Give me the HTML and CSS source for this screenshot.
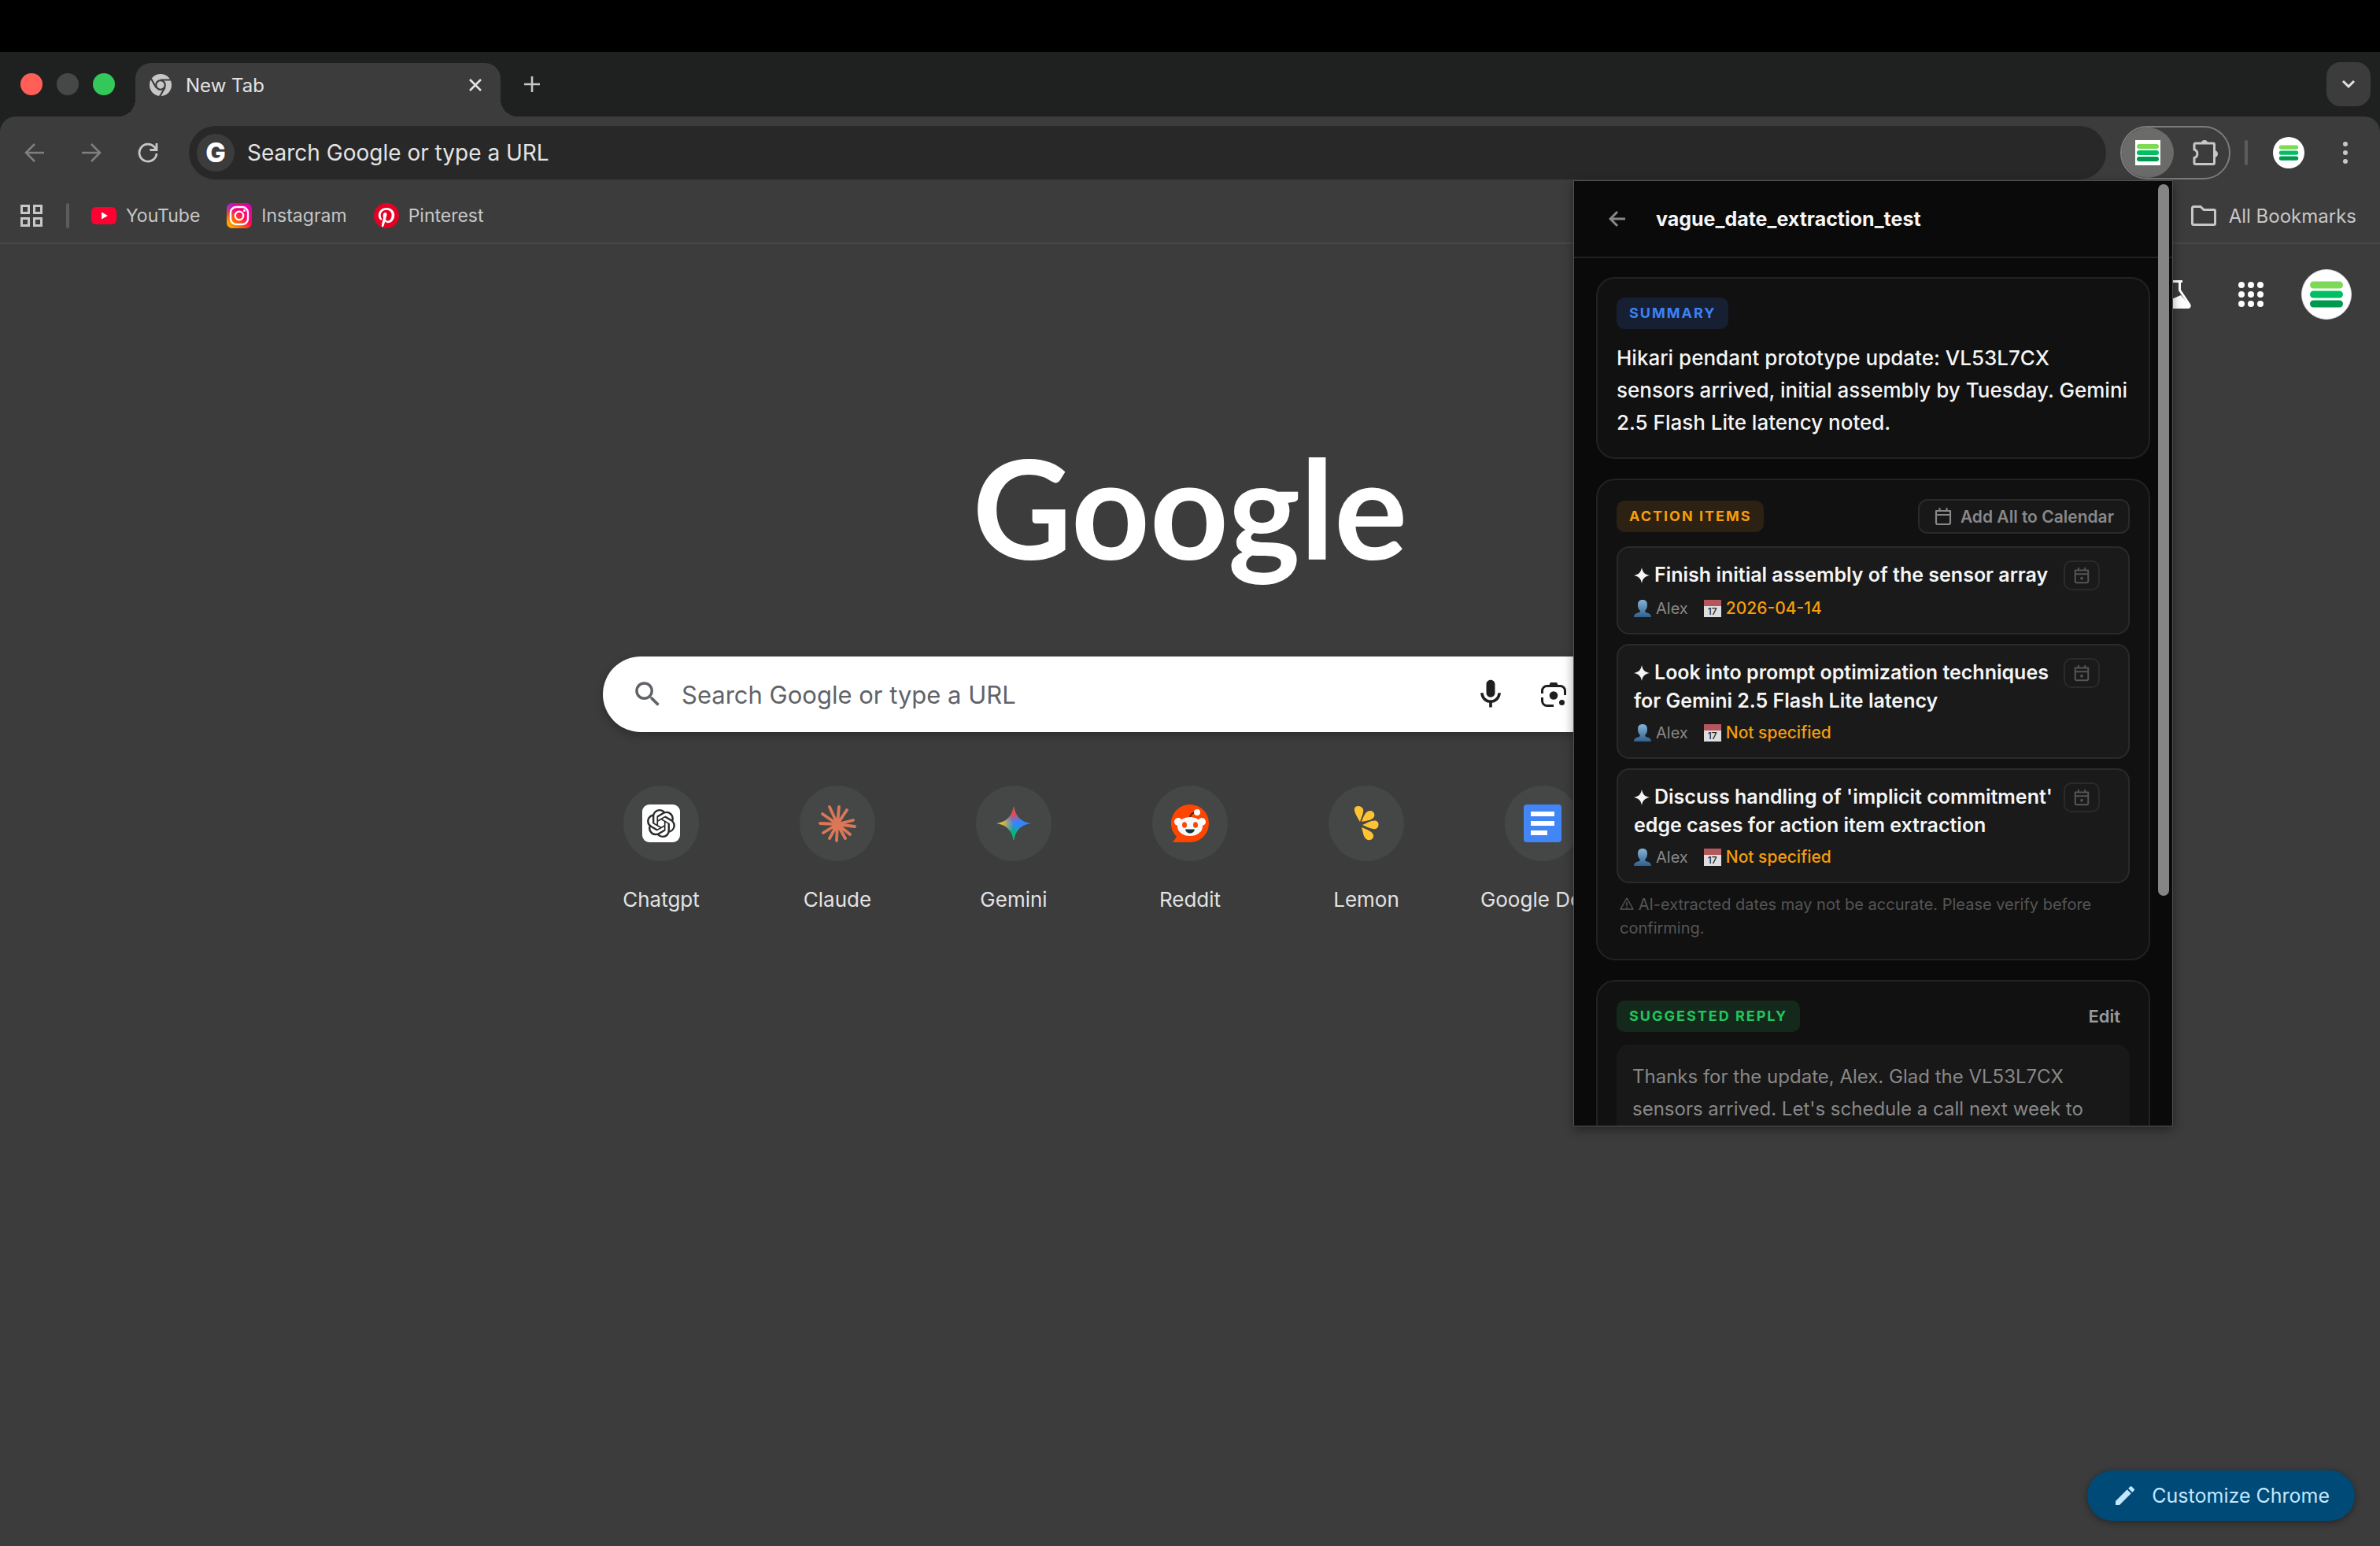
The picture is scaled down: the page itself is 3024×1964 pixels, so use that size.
FILE: index.html
```html
<!DOCTYPE html>
<html lang="en">
<head>
    <meta charset="UTF-8">
    <meta name="viewport" content="width=device-width, initial-scale=1.0">
    <title>New Tab</title>
    <link rel="stylesheet" href="styles.css">
</head>
<body>
    <svg width="0" height="0" class="defs">
        <symbol id="bars" viewBox="0 0 32 32">
            <rect x="2" y="5" width="28" height="6" rx="3" fill="#7ed957"/>
            <rect x="2" y="13" width="28" height="6" rx="3" fill="#00bf63"/>
            <rect x="2" y="21" width="28" height="6" rx="3" fill="#00994d"/>
        </symbol>
        <symbol id="calendar" viewBox="0 0 24 24">
            <path d="M3 5h18v15a2 2 0 0 1-2 2H5a2 2 0 0 1-2-2zM3 10h18M7.500 2v3M16.500 2v3" fill="none" stroke="currentColor" stroke-width="2.200" stroke-linejoin="round" stroke-linecap="round"/>
        </symbol>
        <symbol id="person" viewBox="0 0 22 22">
            <path d="M0 22c0-4 3-5 7-6l1-2C5.500 12 5 9 5 6c0-4 2.500-6 6-6s6 2 6 6c0 3-.5 6-3 8l1 2c4 1 7 2 7 6z" fill="url(#blue)"/>
        </symbol>
        <linearGradient id="blue" x1="0" y1="0" x2="0" y2="1">
            <stop offset="0" stop-color="#86b4d6"/>
            <stop offset="1" stop-color="#2f6190"/>
        </linearGradient>
        <linearGradient id="insta" x1="0" y1="1" x2="1" y2="0">
            <stop offset="0" stop-color="#ffc800"/>
            <stop offset=".3" stop-color="#ff6a00"/>
            <stop offset=".6" stop-color="#ff0069"/>
            <stop offset="1" stop-color="#d300c5"/>
        </linearGradient>
        <radialGradient id="instaTop" cx="0" cy="0" r=".6">
            <stop offset="0" stop-color="#7638fa"/>
            <stop offset="1" stop-color="#d300c5" stop-opacity="0"/>
        </radialGradient>
        <radialGradient id="gemRed" cx=".5" cy="0" r=".48">
            <stop offset=".4" stop-color="#fa4340"/>
            <stop offset="1" stop-color="#fa4340" stop-opacity="0"/>
        </radialGradient>
        <radialGradient id="gemYellow" cx="0" cy=".5" r=".5">
            <stop offset=".3" stop-color="#fabc12"/>
            <stop offset="1" stop-color="#fabc12" stop-opacity="0"/>
        </radialGradient>
        <radialGradient id="gemGreen" cx=".45" cy="1" r=".5">
            <stop offset=".4" stop-color="#08b962"/>
            <stop offset="1" stop-color="#08b962" stop-opacity="0"/>
        </radialGradient>
    </svg>

    <div class="menubar"></div>

    <div class="tabstrip">
        <div class="lights">
            <span class="light red"></span>
            <span class="light gray"></span>
            <span class="light green"></span>
        </div>
        <div class="tab">
            <svg class="tab-icon" viewBox="0 0 28 28">
                <circle cx="14" cy="14" r="14" fill="#c7c7c7"/>
                <circle cx="14" cy="14" r="5.800" fill="#c7c7c7" stroke="#3c3c3c" stroke-width="2.200"/>
                <path d="M14 7.500h13M8.400 17.200L2 6M19.600 17.200L13 28.500" stroke="#3c3c3c" stroke-width="2.200"/>
            </svg>
            <span class="tab-title">New Tab</span>
            <button class="tab-close" aria-label="Close tab">
                <svg width="16" height="16" viewBox="0 0 16 16"><path d="M1 1l14 14M15 1L1 15" stroke="#e3e3e3" stroke-width="2.600"/></svg>
            </button>
        </div>
        <button class="new-tab" aria-label="New tab">
            <svg width="20" height="20" viewBox="0 0 20 20"><path d="M10 0v20M0 10h20" stroke="#c7c7c7" stroke-width="2.600"/></svg>
        </button>
        <button class="tab-search" aria-label="Search tabs">
            <svg width="18" height="12" viewBox="0 0 18 12"><path d="M2 2l7 7 7-7" fill="none" stroke="#e3e3e3" stroke-width="3"/></svg>
        </button>
    </div>

    <div class="chrome">
        <div class="toolbar">
            <button class="nav" aria-label="Back">
                <svg width="26" height="26" viewBox="0 0 26 26"><path d="M25 13H3M13 2L2 13l11 11" fill="none" stroke="#7f7f7f" stroke-width="2.600"/></svg>
            </button>
            <button class="nav" aria-label="Forward">
                <svg width="26" height="26" viewBox="0 0 26 26"><path d="M1 13h22M13 2l11 11-11 11" fill="none" stroke="#7f7f7f" stroke-width="2.600"/></svg>
            </button>
            <button class="nav" aria-label="Reload">
                <svg width="26" height="26" viewBox="0 0 26 26"><path d="M24 14a11 11 0 1 1-3-8.500l3 3.500M24 1v8.500h-8.500" fill="none" stroke="#c7c7c7" stroke-width="2.800"/></svg>
            </button>
            <div class="omnibox">
                <span class="g-badge">G</span>
                <input type="text" aria-label="Address bar" placeholder="Search Google or type a URL">
            </div>
            <div class="extensions">
                <button class="ext active" aria-label="Extension">
                    <svg class="ext-logo" width="32" height="32"><use href="#bars"/></svg>
                </button>
                <button class="ext puzzle" aria-label="Extensions">
                    <svg width="34" height="34" viewBox="0 0 34 34"><path d="M3 6.500A1.500 1.500 0 0 1 4.500 5H27a1.500 1.500 0 0 1 1.500 1.500V30a1.500 1.500 0 0 1-1.500 1.500H4.500A1.500 1.500 0 0 1 3 30v-6.500a5.500 5.500 0 0 0 0-10.500z" fill="none" stroke="#c7c7c7" stroke-width="3"/><path d="M12 5a4 4 0 0 1 8 0zM28.500 14a4 4 0 0 1 0 9z" fill="#c7c7c7"/></svg>
                </button>
            </div>
            <span class="divider"></span>
            <button class="profile" aria-label="Profile">
                <svg width="28" height="28"><use href="#bars"/></svg>
            </button>
            <button class="menu" aria-label="Menu">
                <svg width="6" height="28" viewBox="0 0 6 28"><circle cx="3" cy="3" r="3"/><circle cx="3" cy="14" r="3"/><circle cx="3" cy="25" r="3"/></svg>
            </button>
        </div>

        <div class="bookmarks">
            <button class="apps-button" aria-label="Tab groups">
                <svg width="28" height="28" viewBox="0 0 28 28"><path d="M1.500 1.500h9v9h-9zM17.500 1.500h9v9h-9zM1.500 17.500h9v9h-9zM17.500 17.500h9v9h-9z" fill="none" stroke="#c7c7c7" stroke-width="3"/></svg>
            </button>
            <span class="divider"></span>
            <a href="#" class="bookmark">
                <svg width="32" height="32" viewBox="0 0 32 32"><rect y="5" width="32" height="22" rx="6" fill="#ff0033"/><path d="M13 11.500l8 4.500-8 4.500z" fill="#fff"/></svg>
                YouTube
            </a>
            <a href="#" class="bookmark">
                <svg width="32" height="32" viewBox="0 0 32 32">
                    <rect width="32" height="32" rx="7" fill="url(#insta)"/>
                    <rect width="32" height="32" rx="7" fill="url(#instaTop)"/>
                    <rect x="5" y="5" width="22" height="22" rx="7" fill="none" stroke="#fff" stroke-width="2.400"/>
                    <circle cx="16" cy="16" r="5.200" fill="none" stroke="#fff" stroke-width="2.400"/>
                    <circle cx="22.500" cy="9.500" r="1.500" fill="#fff"/>
                </svg>
                Instagram
            </a>
            <a href="#" class="bookmark">
                <svg width="32" height="32" viewBox="0 0 24 24"><circle cx="12" cy="12" r="11.500" fill="#fff"/><path fill="#e60023" d="M12.017 0C5.396 0 .029 5.367.029 11.987c0 5.079 3.158 9.417 7.618 11.162-.105-.949-.199-2.403.041-3.439.219-.937 1.406-5.957 1.406-5.957s-.359-.72-.359-1.781c0-1.663.967-2.911 2.168-2.911 1.024 0 1.518.769 1.518 1.688 0 1.029-.653 2.567-.992 3.992-.285 1.193.6 2.165 1.775 2.165 2.128 0 3.768-2.245 3.768-5.487 0-2.861-2.063-4.869-5.008-4.869-3.410 0-5.409 2.562-5.409 5.199 0 1.033.394 2.143.889 2.741.099.12.112.225.085.345-.09.375-.293 1.199-.334 1.363-.053.225-.172.271-.401.165-1.495-.69-2.433-2.878-2.433-4.646 0-3.776 2.748-7.252 7.920-7.252 4.158 0 7.392 2.967 7.392 6.923 0 4.135-2.607 7.462-6.233 7.462-1.214 0-2.354-.629-2.758-1.379l-.749 2.848c-.269 1.045-1.004 2.352-1.498 3.146 1.123.345 2.306.535 3.550.535 6.607 0 11.985-5.365 11.985-11.987C23.970 5.390 18.592.026 11.985.026L12.017 0z"/></svg>
                Pinterest
            </a>
            <a href="#" class="bookmark all">
                <svg width="32" height="26" viewBox="0 0 32 26"><path d="M1.500 3A1.500 1.500 0 0 1 3 1.500h9l4 4h13A1.500 1.500 0 0 1 30.500 7v16a1.500 1.500 0 0 1-1.500 1.500H3A1.500 1.500 0 0 1 1.500 23z" fill="none" stroke="#c7c7c7" stroke-width="3"/></svg>
                All Bookmarks
            </a>
        </div>
    </div>

    <main class="page">
        <div class="page-actions">
            <button aria-label="Labs">
                <svg width="40" height="36" viewBox="0 0 40 36"><path d="M11 1.500h18M14.500 2v10.500L2.500 30.500c-1.500 2.500-.5 4 2 4h31c2.500 0 3.500-1.500 2-4L25.500 12.500V2" fill="none" stroke="#fff" stroke-width="3"/><path d="M8 27l19-8 11 13-1 3H3l-1-3z" fill="#fff"/></svg>
            </button>
            <button aria-label="Google apps">
                <svg width="32" height="32" viewBox="0 0 32 32" fill="#fff"><circle cx="4" cy="4" r="4"/><circle cx="16" cy="4" r="4"/><circle cx="28" cy="4" r="4"/><circle cx="4" cy="16" r="4"/><circle cx="16" cy="16" r="4"/><circle cx="28" cy="16" r="4"/><circle cx="4" cy="28" r="4"/><circle cx="16" cy="28" r="4"/><circle cx="28" cy="28" r="4"/></svg>
            </button>
            <button class="avatar" aria-label="Google account">
                <svg width="48" height="48"><use href="#bars"/></svg>
            </button>
        </div>

        <h1 class="logo">Google</h1>

        <form class="search">
            <svg width="42" height="42" viewBox="0 0 24 24"><path fill="#5f6368" d="M15.500 14h-.79l-.28-.27A6.470 6.470 0 0 0 16 9.500 6.500 6.500 0 1 0 9.500 16c1.610 0 3.090-.59 4.230-1.570l.27.28v.79l5 4.990L20.490 19l-4.990-5zm-6 0a4.500 4.500 0 1 1 0-9 4.500 4.500 0 0 1 0 9z"/></svg>
            <input type="text" aria-label="Search" placeholder="Search Google or type a URL">
            <button type="button" aria-label="Search by voice">
                <svg width="44" height="44" viewBox="0 0 24 24"><path fill="#1f1f1f" d="M12 14c1.660 0 3-1.340 3-3V5c0-1.660-1.340-3-3-3S9 3.340 9 5v6c0 1.660 1.340 3 3 3zm5-3c0 2.760-2.240 5-5 5s-5-2.240-5-5H5c0 3.530 2.610 6.430 6 6.920V21h2v-3.080c3.390-.49 6-3.390 6-6.920h-2z"/></svg>
            </button>
            <button type="button" aria-label="Search by image">
                <svg width="32" height="32" viewBox="0 0 32 32"><path d="M1.500 15v-3.500a6 6 0 0 1 6-6h17a6 6 0 0 1 6 6V17M1.500 20v4.500a6 6 0 0 0 6 6H16" fill="none" stroke="#1f1f1f" stroke-width="3"/><path d="M10 5l2-4h8l2 4z" fill="#1f1f1f"/><circle cx="16" cy="17.500" r="5.300" fill="#1f1f1f"/><circle cx="26.500" cy="26.500" r="3.500" fill="#1f1f1f"/></svg>
            </button>
        </form>

        <div class="tiles">
            <a href="#" class="tile">
                <span class="tile-icon">
                    <svg width="48" height="48" viewBox="0 0 48 48"><rect width="48" height="48" rx="9" fill="#fff"/><path transform="translate(6 6) scale(1.500)" fill="#2b2b2b" d="M22.282 9.821a5.985 5.985 0 0 0-.516-4.911 6.046 6.046 0 0 0-6.510-2.900A6.065 6.065 0 0 0 4.981 4.182a5.985 5.985 0 0 0-3.998 2.900 6.046 6.046 0 0 0 .743 7.097 5.980 5.980 0 0 0 .511 4.911 6.051 6.051 0 0 0 6.515 2.900A5.985 5.985 0 0 0 13.260 24a6.056 6.056 0 0 0 5.772-4.206 5.989 5.989 0 0 0 3.998-2.900 6.056 6.056 0 0 0-.748-7.073zm-9.022 12.608a4.476 4.476 0 0 1-2.876-1.041l.142-.08 4.778-2.758a.795.795 0 0 0 .393-.681v-6.737l2.020 1.169a.071.071 0 0 1 .038.052v5.583a4.504 4.504 0 0 1-4.495 4.494zm-9.661-4.125a4.471 4.471 0 0 1-.535-3.014l.142.085 4.783 2.758a.771.771 0 0 0 .781 0l5.843-3.369v2.332a.08.08 0 0 1-.033.062L9.740 19.950a4.499 4.499 0 0 1-6.141-1.646zM2.341 7.896a4.485 4.485 0 0 1 2.366-1.973V11.600a.766.766 0 0 0 .388.677l5.814 3.354-2.020 1.169a.076.076 0 0 1-.071 0l-4.830-2.787A4.504 4.504 0 0 1 2.341 7.872zm16.596 3.856L13.104 8.364 15.119 7.200a.076.076 0 0 1 .071 0l4.830 2.791a4.494 4.494 0 0 1-.677 8.104v-5.677a.79.79 0 0 0-.407-.667zm2.011-3.023l-.142-.085-4.774-2.782a.776.776 0 0 0-.785 0L9.409 9.230V6.897a.066.066 0 0 1 .028-.062l4.830-2.787a4.499 4.499 0 0 1 6.680 4.660zM8.307 12.863l-2.020-1.164a.08.08 0 0 1-.038-.057V6.074a4.499 4.499 0 0 1 7.376-3.454l-.142.081L8.704 5.459a.795.795 0 0 0-.393.681zm1.098-2.365l2.602-1.500 2.607 1.500v2.999l-2.597 1.500-2.607-1.500z"/></svg>
                </span>
                Chatgpt
            </a>
            <a href="#" class="tile">
                <span class="tile-icon">
                    <svg width="48" height="48" viewBox="0 0 48 48"><path d="M24 25L14 3M24 25L26 3M24 25L36 7M24 25L44 20M24 25L46 28M24 25L40 38M24 25L34 43M24 25L23 46M24 25L14 43M24 25L6 36M24 25L2 24M24 25L5 12" stroke="#d97757" stroke-width="3.800" stroke-linecap="round"/></svg>
                </span>
                Claude
            </a>
            <a href="#" class="tile">
                <span class="tile-icon">
                    <svg width="48" height="48" viewBox="0 0 48 48">
                        <path d="M24 2c2 12 8 20 22 22-14 2-20 10-22 22-2-12-8-20-22-22 14-2 20-10 22-22z" fill="#3186ff"/>
                        <path d="M24 2c2 12 8 20 22 22-14 2-20 10-22 22-2-12-8-20-22-22 14-2 20-10 22-22z" fill="url(#gemGreen)"/>
                        <path d="M24 2c2 12 8 20 22 22-14 2-20 10-22 22-2-12-8-20-22-22 14-2 20-10 22-22z" fill="url(#gemYellow)"/>
                        <path d="M24 2c2 12 8 20 22 22-14 2-20 10-22 22-2-12-8-20-22-22 14-2 20-10 22-22z" fill="url(#gemRed)"/>
                    </svg>
                </span>
                Gemini
            </a>
            <a href="#" class="tile">
                <span class="tile-icon">
                    <svg width="48" height="48" viewBox="0 0 48 48">
                        <path d="M24 0a24 24 0 1 1 0 48H2l5-7A24 24 0 0 1 24 0z" fill="#ff4500"/>
                        <path d="M24 16c1-4 3-6 8-6" fill="none" stroke="#5a1d0c" stroke-width="2"/>
                        <circle cx="33" cy="10" r="4" fill="#fff"/>
                        <circle cx="9" cy="22" r="5" fill="#fff"/>
                        <circle cx="39" cy="22" r="5" fill="#fff"/>
                        <ellipse cx="24" cy="28" rx="16" ry="12" fill="#f4f8fa"/>
                        <ellipse cx="17" cy="26" rx="3" ry="3.800" fill="#ff4500"/>
                        <ellipse cx="31" cy="26" rx="3" ry="3.800" fill="#ff4500"/>
                        <path d="M18 31.500h12c-.5 3-3 5-6 5s-5.500-2-6-5z" fill="#14343b"/>
                    </svg>
                </span>
                Reddit
            </a>
            <a href="#" class="tile">
                <span class="tile-icon">
                    <svg width="48" height="48" viewBox="0 0 48 48" fill="#ffc233">
                        <path d="M16 22C12 15 8 9 9 5s9-4 11 1c1 4-2 10-4 16z"/>
                        <path d="M18 22c2-6 5-14 11-14 5 0 7 6 4 9s-10 4-15 5z"/>
                        <path d="M19 26c5-2 13-7 18-5 4 2 3 9-1 10-5 1-12-3-17-5z"/>
                        <path d="M18 29c5 2 14 5 15 10s-5 8-9 5-4-9-6-15z"/>
                    </svg>
                </span>
                Lemon
            </a>
            <a href="#" class="tile">
                <span class="tile-icon">
                    <svg width="48" height="48" viewBox="0 0 48 48"><rect width="48" height="48" rx="4" fill="#4285f4"/><path d="M9 12h30M9 24h30M9 36h21" stroke="#fff" stroke-width="6"/></svg>
                </span>
                Google Docs
            </a>
        </div>
    </main>

    <button class="customize">
        <svg width="32" height="32" viewBox="0 0 24 24"><path fill="#c2e7ff" d="M3 17.250V21h3.750L17.810 9.940l-3.750-3.750L3 17.250zM20.710 7.040a1 1 0 0 0 0-1.410l-2.340-2.340a1 1 0 0 0-1.410 0l-1.830 1.830 3.750 3.750 1.830-1.830z"/></svg>
        Customize Chrome
    </button>

    <section class="popup">
        <header class="popup-header">
            <button class="back" aria-label="Back">
                <svg width="22" height="22" viewBox="0 0 22 22"><path d="M21 11H3M11 2l-9 9 9 9" fill="none" stroke="#888" stroke-width="3"/></svg>
            </button>
            <h2>vague_date_extraction_test</h2>
        </header>
        <div class="popup-body">
            <article class="card">
                <div class="card-head"><span class="tag blue">SUMMARY</span></div>
                <p class="summary">Hikari pendant prototype update: VL53L7CX sensors arrived, initial assembly by Tuesday. Gemini 2.5 Flash Lite latency noted.</p>
            </article>

            <article class="card">
                <div class="card-head">
                    <span class="tag orange">ACTION ITEMS</span>
                    <button class="add-all"><svg width="24" height="24"><use href="#calendar"/></svg>Add All to Calendar</button>
                </div>
                <ul class="items">
                    <li class="item">
                        <div class="item-head">
                            <h3><svg class="star" width="20" height="20" viewBox="0 0 20 20"><path d="M10 0c1 6 4 9 10 10-6 1-9 4-10 10-1-6-4-9-10-10 6-1 9-4 10-10z"/></svg>Finish initial assembly of the sensor array</h3>
                            <button class="add" aria-label="Add to calendar"><svg width="22" height="22" viewBox="0 0 24 24"><use href="#calendar"/><circle cx="12" cy="16" r="2"/></svg></button>
                        </div>
                        <div class="meta">
                            <span><svg width="22" height="22"><use href="#person"/></svg>Alex</span>
                            <span class="due"><i class="date">17</i>2026-04-14</span>
                        </div>
                    </li>
                    <li class="item">
                        <div class="item-head">
                            <h3><svg class="star" width="20" height="20" viewBox="0 0 20 20"><path d="M10 0c1 6 4 9 10 10-6 1-9 4-10 10-1-6-4-9-10-10 6-1 9-4 10-10z"/></svg>Look into prompt optimization techniques for Gemini 2.5 Flash Lite latency</h3>
                            <button class="add" aria-label="Add to calendar"><svg width="22" height="22" viewBox="0 0 24 24"><use href="#calendar"/><circle cx="12" cy="16" r="2"/></svg></button>
                        </div>
                        <div class="meta">
                            <span><svg width="22" height="22"><use href="#person"/></svg>Alex</span>
                            <span class="due"><i class="date">17</i>Not specified</span>
                        </div>
                    </li>
                    <li class="item">
                        <div class="item-head">
                            <h3><svg class="star" width="20" height="20" viewBox="0 0 20 20"><path d="M10 0c1 6 4 9 10 10-6 1-9 4-10 10-1-6-4-9-10-10 6-1 9-4 10-10z"/></svg>Discuss handling of 'implicit commitment' edge cases for action item extraction</h3>
                            <button class="add" aria-label="Add to calendar"><svg width="22" height="22" viewBox="0 0 24 24"><use href="#calendar"/><circle cx="12" cy="16" r="2"/></svg></button>
                        </div>
                        <div class="meta">
                            <span><svg width="22" height="22"><use href="#person"/></svg>Alex</span>
                            <span class="due"><i class="date">17</i>Not specified</span>
                        </div>
                    </li>
                </ul>
                <p class="note"><svg width="18" height="18" viewBox="0 0 18 18"><path d="M9 2l8 14H1zM9 7v5M9 13v2" fill="none" stroke="currentColor" stroke-width="1.500" stroke-linejoin="round"/></svg> AI-extracted dates may not be accurate. Please verify before confirming.</p>
            </article>

            <article class="card">
                <div class="card-head">
                    <span class="tag green-tag">SUGGESTED REPLY</span>
                    <button class="edit">Edit</button>
                </div>
                <p class="reply">Thanks for the update, Alex. Glad the VL53L7CX sensors arrived. Let's schedule a call next week to</p>
            </article>
        </div>
        <span class="thumb"></span>
    </section>
</body>
</html>
```
FILE: styles.css
```css
* {
    box-sizing: border-box;
}
body {
    margin: 0;
    min-height: 100vh;
    display: flex;
    flex-direction: column;
    position: relative;
    overflow: hidden;
    background-color: #3c3c3c;
    color: #e3e3e3;
    font-family: Inter, sans-serif;
    font-size: 24px;
}
h1, h2, h3, p, ul {
    margin: 0;
    padding: 0;
}
ul {
    list-style: none;
}
button {
    display: flex;
    align-items: center;
    justify-content: center;
    padding: 0;
    border: none;
    background: none;
    color: inherit;
    font: inherit;
    cursor: pointer;
}
a {
    color: inherit;
    text-decoration: none;
}
input {
    flex: 1;
    min-width: 0;
    padding: 0;
    border: none;
    outline: none;
    background: none;
    font: inherit;
}
svg {
    flex-shrink: 0;
}
.defs {
    position: absolute;
}

/* Tabs */
.menubar {
    height: 66px;
    background-color: #000;
}
.tabstrip {
    position: relative;
    z-index: 1;
    height: 82px;
    display: flex;
    align-items: center;
    padding: 0 12px 0 26px;
    background-color: #1f2120;
}
.lights {
    display: flex;
    gap: 18px;
    margin-right: 26px;
}
.light {
    width: 28px;
    height: 28px;
    border-radius: 50%;
}
.red {
    background-color: #ff5f57;
}
.gray {
    background-color: #464848;
}
.green {
    background-color: #34c759;
}
.tab {
    position: relative;
    align-self: flex-end;
    width: 464px;
    height: 68px;
    display: flex;
    align-items: center;
    padding: 0 24px 12px 18px;
    border-radius: 20px 20px 0 0;
    background-color: #3c3c3c;
}
.tab::before,
.tab::after {
    content: "";
    position: absolute;
    bottom: 0;
    width: 22px;
    height: 22px;
}
.tab::before {
    right: 100%;
    background: radial-gradient(circle at 0 0, transparent 22px, #3c3c3c 22px);
}
.tab::after {
    left: 100%;
    background: radial-gradient(circle at 100% 0, transparent 22px, #3c3c3c 22px);
}
.tab-icon {
    width: 28px;
    height: 28px;
}
.tab-title {
    flex: 1;
    margin-left: 18px;
}
.new-tab {
    margin-left: 30px;
}
.tab-search {
    width: 56px;
    height: 56px;
    margin-left: auto;
    border-radius: 18px;
    background-color: #3c3c3c;
}

/* Toolbar and bookmarks */
.chrome {
    border-bottom: 2px solid #484848;
    background: #3c3c3c;
    border-radius: 20px 20px 0 0;
    box-shadow: 0 -20px 0 #1f2120;
}
.toolbar {
    display: flex;
    align-items: center;
    height: 80px;
    padding: 12px 24px 0 8px;
}
.nav {
    width: 72px;
    height: 68px;
}
.omnibox {
    flex: 1;
    display: flex;
    align-items: center;
    height: 68px;
    margin-left: 16px;
    padding-left: 10px;
    border-radius: 34px;
    background-color: #282828;
    font-size: 28px;
}
.omnibox input::placeholder {
    color: #e3e3e3;
}
.g-badge {
    width: 48px;
    height: 48px;
    margin-right: 16px;
    border-radius: 50%;
    background-color: #3c3c3c;
    color: #fff;
    font-size: 34px;
    font-weight: 800;
    line-height: 48px;
    text-align: center;
}
.extensions {
    display: flex;
    margin-left: 18px;
    border: 2px solid #7c7c7c;
    border-radius: 34px;
}
.ext {
    width: 70px;
    height: 64px;
}
.active {
    width: 66px;
    border-radius: 50%;
    background-color: #6b6b69;
}
.puzzle {
    padding-left: 10px;
}
.ext-logo {
    background-color: #fff;
}
.divider {
    width: 4px;
    height: 32px;
    border-radius: 2px;
    background-color: #5c5c5c;
}
.toolbar .divider {
    margin: 0 32px 0 18px;
}
.profile {
    width: 40px;
    height: 40px;
    border-radius: 50%;
    background-color: #fff;
}
.menu {
    width: 40px;
    margin-left: 32px;
    fill: #c7c7c7;
}
.bookmarks {
    display: flex;
    align-items: center;
    height: 80px;
    padding: 12px 30px 0 26px;
    color: #c7c7c7;
}
.bookmarks .divider {
    margin: 0 28px 0 30px;
}
.bookmark {
    display: flex;
    align-items: center;
    gap: 12px;
    margin-right: 34px;
    font-size: 23px;
}
.all {
    gap: 16px;
    margin: 0 0 0 auto;
    font-size: 24px;
}

/* New tab page */
.page {
    flex: 1;
    display: flex;
    flex-direction: column;
    align-items: center;
}
.page-actions {
    align-self: stretch;
    display: flex;
    justify-content: flex-end;
    gap: 32px;
    padding: 32px 36px 0;
}
.page-actions button {
    width: 64px;
    height: 64px;
}
.page-actions .avatar {
    border: 1px solid #dadce0;
    border-radius: 50%;
    background-color: #fff;
}
.logo {
    margin-top: 128px;
    color: #fff;
    font-family: Lato, sans-serif;
    font-size: 174px;
    font-weight: 700;
    line-height: 220px;
}
.search {
    display: flex;
    align-items: center;
    width: 1492px;
    height: 96px;
    margin-top: 80px;
    padding: 0 28px 0 36px;
    border-radius: 48px;
    background-color: #fff;
    box-shadow: 0 4px 12px rgba(0, 0, 0, 0.25);
    font-size: 31px;
}
.search input {
    margin-left: 22px;
}
.search input::placeholder {
    color: #5f6368;
}
.search button {
    width: 80px;
    height: 80px;
}
.search button:last-child {
    margin-right: 216px;
}
.tiles {
    display: grid;
    grid-template-columns: repeat(7, 224px);
    margin-top: 68px;
}
.tile {
    display: flex;
    flex-direction: column;
    align-items: center;
    gap: 32px;
    font-size: 26px;
    line-height: 34px;
}
.tile-icon {
    width: 96px;
    height: 96px;
    display: flex;
    align-items: center;
    justify-content: center;
    border-radius: 50%;
    background-color: #444746;
}
.customize {
    position: absolute;
    right: 32px;
    bottom: 32px;
    height: 64px;
    gap: 18px;
    padding: 0 32px;
    border-radius: 32px;
    background-color: #004a77;
    box-shadow: 0 2px 8px rgba(0, 0, 0, 0.4);
    color: #c2e7ff;
    font-size: 25px;
}

/* Extension popup */
.popup {
    position: absolute;
    top: 229px;
    right: 263px;
    width: 762px;
    height: 1202px;
    overflow: hidden;
    border: 1px solid #505050;
    background-color: #0a0a0a;
    box-shadow: 0 4px 12px rgba(0, 0, 0, 0.4);
    color: #f5f5f5;
}
.popup-header {
    display: flex;
    align-items: center;
    height: 98px;
    padding-left: 44px;
    border-bottom: 2px solid #222;
}
.popup-header h2 {
    margin-left: 38px;
    font-size: 25px;
    font-weight: 700;
}
.popup-body {
    display: flex;
    flex-direction: column;
    gap: 25px;
    padding: 24px 28px;
}
.card {
    padding: 24px;
    border: 2px solid #222;
    border-radius: 24px;
    background-color: #111;
}
.card-head {
    display: flex;
    align-items: center;
    justify-content: space-between;
    margin-bottom: 16px;
}
.tag {
    padding: 0 16px;
    border-radius: 10px;
    font-size: 18px;
    font-weight: 700;
    letter-spacing: 2px;
    line-height: 40px;
}
.blue {
    background-color: #162032;
    color: #3b82f6;
}
.orange {
    background-color: #2c2113;
    color: #f59e0b;
}
.green-tag {
    background-color: #14291b;
    color: #22c55e;
}
.summary {
    font-size: 26px;
    font-weight: 500;
    line-height: 41px;
}
.add-all {
    gap: 10px;
    height: 44px;
    padding: 0 18px;
    border: 2px solid #2a2a2a;
    border-radius: 12px;
    background-color: #181818;
    color: #888;
    font-size: 21px;
    font-weight: 600;
}
.items {
    display: flex;
    flex-direction: column;
    gap: 12px;
}
.item {
    padding: 16px 20px;
    border: 2px solid #2a2a2a;
    border-radius: 16px;
    background-color: #1a1a1a;
}
.item-head {
    display: flex;
    align-items: flex-start;
    justify-content: space-between;
    gap: 8px;
    padding-right: 16px;
    margin-bottom: 8px;
}
.item h3 {
    font-size: 25px;
    font-weight: 600;
    line-height: 36px;
}
.star {
    margin-right: 6px;
    vertical-align: -2px;
    fill: #f5f5f5;
}
.add {
    flex-shrink: 0;
    width: 46px;
    height: 38px;
    border: 2px solid #2a2a2a;
    border-radius: 10px;
    color: #555;
    fill: #555;
}
.meta {
    display: flex;
    gap: 20px;
    color: #888;
    font-size: 20px;
    line-height: 30px;
}
.meta span {
    display: flex;
    align-items: center;
    gap: 6px;
}
.meta .due {
    color: #f59e0b;
    font-size: 21px;
    font-weight: 500;
}
.date {
    width: 22px;
    height: 22px;
    padding-top: 8px;
    background: linear-gradient(#b5565c 8px, #dedede 8px);
    color: #222;
    font-size: 12px;
    font-style: normal;
    line-height: 14px;
    text-align: center;
}
.note {
    margin-top: 12px;
    padding-left: 4px;
    color: #555;
    font-size: 20px;
    line-height: 30px;
}
.note svg {
    vertical-align: -1px;
}
.edit {
    padding: 0 12px;
    color: #999;
    font-size: 22px;
    font-weight: 600;
}
.reply {
    padding: 20px;
    border-radius: 16px;
    background-color: #181818;
    color: #888;
    font-size: 24px;
    line-height: 41px;
}
.thumb {
    position: absolute;
    top: 4px;
    right: 4px;
    width: 14px;
    height: 904px;
    border-radius: 7px;
    background-color: #858585;
}
```
